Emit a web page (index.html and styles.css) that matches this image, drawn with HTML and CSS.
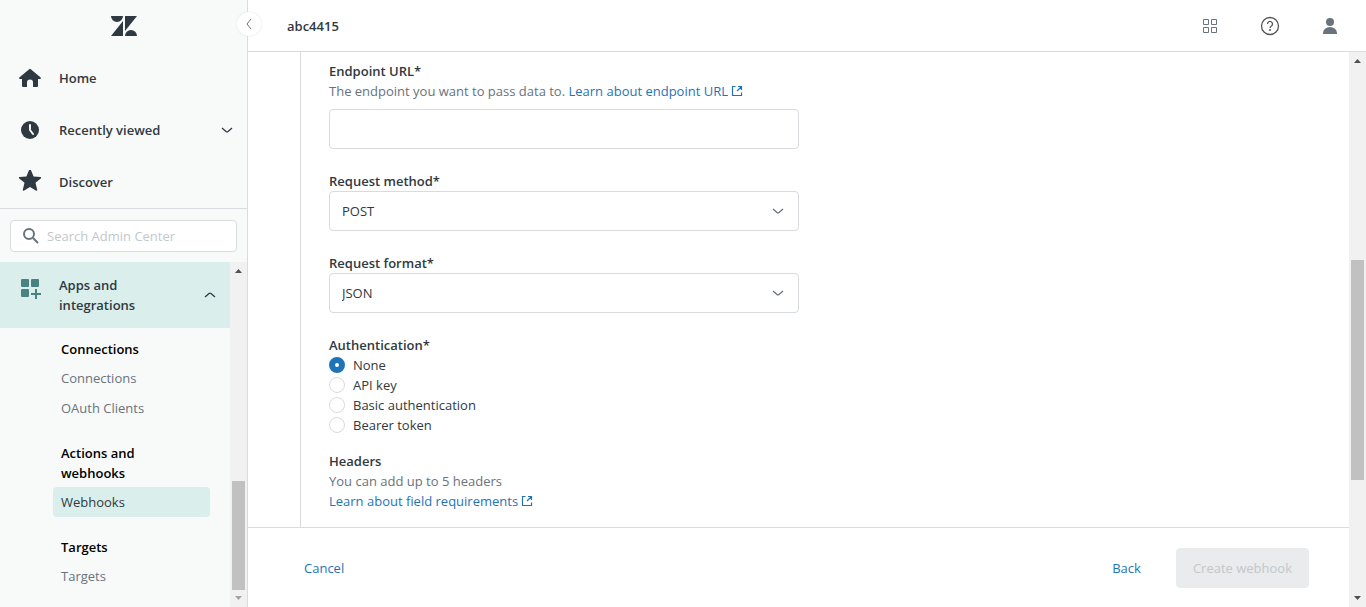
FILE: index.html
```html
<!DOCTYPE html>
<html lang="en">
<head>
<meta charset="utf-8">
<meta name="viewport" content="width=device-width, initial-scale=1">
<title>Create webhook</title>
<link rel="stylesheet" href="styles.css">
</head>
<body>
<div class="app">
  <aside class="sidebar">
    <div class="brand">
      <svg class="logo" width="26" height="20" viewBox="0 0 26 20" aria-hidden="true"><path d="M0 0h12a6 6 0 0 1-12 0zM12 5v15H0zM14 0h12L14 15zM14 20a6 6 0 0 1 12 0z"/></svg>
    </div>
    <button class="collapse" type="button" aria-label="Collapse sidebar">
      <svg width="6" height="12" viewBox="0 0 6 12"><path class="line" d="M5 1 1 6l4 5"/></svg>
    </button>
    <nav class="primary">
      <a class="nav-item" href="#">
        <svg width="22" height="20" viewBox="0 0 22 20"><path d="M10.200 1.200a1.200 1.200 0 0 1 1.600 0l9.600 8c.9.800.5 1.800-.6 1.800H19v7a1 1 0 0 1-1 1h-4v-4.500a3 3 0 0 0-6 0V19H4a1 1 0 0 1-1-1v-7H1.200C.1 11-.3 10 .6 9.200z"/></svg>
        <span>Home</span>
      </a>
      <a class="nav-item" href="#">
        <svg width="22" height="20" viewBox="0 0 22 20"><circle cx="11" cy="10" r="9"/><path class="hand" d="M11 5v5l3 4"/></svg>
        <span>Recently viewed</span>
        <svg class="chevron" width="12" height="6" viewBox="0 0 12 6"><path class="line" d="M1 1l4 3.500q1 .8 2 0L11 1"/></svg>
      </a>
      <a class="nav-item" href="#">
        <svg width="22" height="24" viewBox="0 0 22 24"><path d="M10.100 0q.9-1.600 1.800 0l2.700 6.400 6.700.5c1 .1 1 1 .4 1.500l-5.200 4.400 1.700 6.900c.2 1-.6 1.400-1.400.9L11 16.900l-5.800 3.700c-.8.500-1.600 0-1.400-.9l1.700-6.900L.3 8.400C-.3 7.900-.3 7 .7 6.900l6.700-.5z"/></svg>
        <span>Discover</span>
      </a>
    </nav>
    <div class="search-wrap">
      <label class="search">
        <svg width="18" height="18" viewBox="0 0 18 18"><circle cx="7" cy="7" r="5"/><path d="M11 11l5 5"/></svg>
        <input type="search" placeholder="Search Admin Center" aria-label="Search Admin Center">
      </label>
    </div>
    <div class="menu-scroll">
      <nav class="menu">
        <button class="menu-group" type="button">
          <svg width="22" height="22" viewBox="0 0 22 22"><rect x="2" y="1" width="8" height="8" rx="1"/><rect x="12" y="1" width="8" height="8" rx="1"/><rect x="2" y="11" width="8" height="8" rx="1"/><path d="M16 11h2v4h4v2h-4v4h-2v-4h-4v-2h4z"/></svg>
          <span>Apps and integrations</span>
          <svg class="chevron" width="12" height="6" viewBox="0 0 12 6"><path class="line" d="M1 5l4-3.500q1-.8 2 0L11 5"/></svg>
        </button>
        <div class="sections">
          <section class="section">
            <h2>Connections</h2>
            <div class="links"><a href="#">Connections</a><a href="#">OAuth Clients</a></div>
          </section>
          <section class="section">
            <h2>Actions and webhooks</h2>
            <div class="links"><a class="active" href="#" aria-current="page">Webhooks</a></div>
          </section>
          <section class="section">
            <h2>Targets</h2>
            <div class="links"><a href="#">Targets</a></div>
          </section>
        </div>
      </nav>
      <div class="scrollbar side-bar" aria-hidden="true">
        <svg width="17" height="17" viewBox="0 0 17 17"><path d="M5 11h7L8.500 7z"/></svg>
        <div class="before"></div><div class="thumb"></div><div class="after"></div>
        <svg class="end" width="17" height="17" viewBox="0 0 17 17"><path d="M5 6h7l-3.500 4z"/></svg>
      </div>
    </div>
  </aside>

  <div class="workspace">
    <header class="topbar">
      <h1>abc4415</h1>
      <div class="tools">
        <button type="button" aria-label="Products"><svg width="16" height="16" viewBox="0 0 16 16"><path class="line" d="M1.500 1.500h5v5h-5zM9.500 1.500h5v5h-5zM1.500 9.500h5v5h-5zM9.500 9.500h5v5h-5z"/></svg></button>
        <button type="button" aria-label="Help"><svg class="help" width="20" height="20" viewBox="0 0 20 20"><circle class="line" cx="10" cy="10" r="8.500"/><path class="line" d="M7.500 8a2.500 2.500 0 1 1 3.900 2C10.300 10.700 10 11 10 12"/><circle class="dot" cx="10" cy="14" r="1"/></svg></button>
        <button type="button" aria-label="Profile"><svg class="person" width="14" height="16" viewBox="0 0 14 16"><circle cx="7" cy="4" r="4"/><path d="M0 16v-1a7 6 0 0 1 14 0v1z"/></svg></button>
      </div>
    </header>
    <div class="body">
      <div class="page">
        <main class="content">
          <form class="form" id="webhook">
            <div class="field">
              <label class="label" for="url">Endpoint URL*</label>
              <p class="hint">The endpoint you want to pass data to. <a href="#">Learn about endpoint URL <svg width="12" height="12" viewBox="0 0 12 12"><path d="M4.500 1.500h-3v9h9v-3M7 1.500h3.500V5M10.500 1.500L6 6"/></svg></a></p>
              <input class="box url" id="url" type="url">
            </div>
            <div class="field">
              <label class="label" for="method">Request method*</label>
              <div class="select">
                <select class="box" id="method"><option>POST</option><option>GET</option></select>
                <svg width="12" height="6" viewBox="0 0 12 6"><path class="line" d="M1 1l4 3.500q1 .8 2 0L11 1"/></svg>
              </div>
            </div>
            <div class="field">
              <label class="label" for="format">Request format*</label>
              <div class="select">
                <select class="box" id="format"><option>JSON</option><option>XML</option></select>
                <svg width="12" height="6" viewBox="0 0 12 6"><path class="line" d="M1 1l4 3.500q1 .8 2 0L11 1"/></svg>
              </div>
            </div>
            <fieldset class="field">
              <legend class="label">Authentication*</legend>
              <label class="radio"><input type="radio" name="auth" checked>None</label>
              <label class="radio"><input type="radio" name="auth">API key</label>
              <label class="radio"><input type="radio" name="auth">Basic authentication</label>
              <label class="radio"><input type="radio" name="auth">Bearer token</label>
            </fieldset>
          </form>
          <section class="headers">
            <h2 class="label">Headers</h2>
            <p class="hint">You can add up to 5 headers</p>
            <p class="hint"><a href="#">Learn about field requirements <svg width="12" height="12" viewBox="0 0 12 12"><path d="M4.500 1.500h-3v9h9v-3M7 1.500h3.500V5M10.500 1.500L6 6"/></svg></a></p>
          </section>
        </main>
        <footer class="footer">
          <button class="text-btn" type="button">Cancel</button>
          <div class="actions">
            <button class="text-btn" type="button">Back</button>
            <button class="primary-btn" type="submit" form="webhook" disabled>Create webhook</button>
          </div>
        </footer>
      </div>
      <div class="scrollbar page-bar" aria-hidden="true">
        <svg width="17" height="17" viewBox="0 0 17 17"><path d="M5 11h7L8.500 7z"/></svg>
        <div class="before"></div><div class="thumb"></div><div class="after"></div>
        <svg width="17" height="17" viewBox="0 0 17 17"><path d="M5 6h7l-3.500 4z"/></svg>
      </div>
    </div>
  </div>
</div>
</body>
</html>
```

FILE: styles.css
```css
* { box-sizing: border-box; }
body {
  margin: 0;
  color: #2f3941;
  background: #fff;
  font: 13px/20px "Open Sans", "Noto Sans", sans-serif;
}
h1, h2, p { margin: 0; font-size: 13px; line-height: 20px; }
h1, h2, .label { font-weight: 600; }
p { font-weight: 400; }
a { color: inherit; text-decoration: none; }
button, input, select { font: inherit; color: inherit; }
button { border: 0; padding: 0; background: none; cursor: pointer; }
svg { flex: none; display: block; fill: currentColor; }
.line { fill: none; stroke: currentColor; }

.app { display: flex; height: 100vh; }

.sidebar {
  position: relative;
  display: flex;
  flex: none;
  flex-direction: column;
  width: 248px;
  background: #f8faf9;
  border-right: 1px solid #d8dcde;
}
.brand { display: flex; justify-content: center; align-items: center; height: 52px; flex: none; }
.collapse {
  position: absolute;
  top: 12px;
  right: -14px;
  display: grid;
  place-items: center;
  width: 24px;
  height: 24px;
  border-radius: 50%;
  color: #68737d;
  background: #fff;
  box-shadow: 0 0 2px #d8dcde;
}
.primary { border-bottom: 1px solid #d8dcde; }
.nav-item { display: flex; align-items: center; gap: 18px; height: 52px; padding: 0 14px 0 19px; font-weight: 600; }
.chevron { margin-left: auto; }
.chevron .line, .select .line { stroke-width: 1.3; }
.hand { fill: none; stroke: #f8faf9; stroke-width: 2; stroke-linecap: round; }
.search-wrap { padding: 11px 10px 10px; }
.search {
  display: flex;
  align-items: center;
  gap: 7px;
  height: 32px;
  padding: 0 11px;
  background: #fff;
  border: 1px solid #d8dcde;
  border-radius: 4px;
}
.search svg { fill: none; stroke: #68737d; stroke-width: 2; }
.search input { flex: 1; min-width: 0; padding: 0; border: 0; outline: 0; background: none; }
.search input::placeholder { color: #c2c8cc; opacity: 1; }

.menu-scroll { display: flex; flex: 1; min-height: 0; }
.menu { flex: 1; min-width: 0; overflow: hidden; }
.menu-group {
  display: flex;
  align-items: center;
  gap: 18px;
  width: 100%;
  padding: 13px 14px 13px 19px;
  text-align: left;
  font-weight: 600;
  background: #daeeec;
}
.menu-group span { width: 90px; }
.menu-group svg:first-child { align-self: flex-start; color: #498283; margin-top: 3px; }
.sections { display: grid; gap: 20px; padding: 11px 20px 16px 53px; }
.section { display: grid; gap: 4px; }
.section h2 { padding: 0 8px; max-width: 120px; color: #000; }
.links { display: grid; }
.links a { padding: 5px 8px; border-radius: 4px; color: #68737d; }
.links .active { color: #2f3941; background: #daeeec; }

.scrollbar { display: flex; flex: none; flex-direction: column; width: 17px; background: #f1f1f1; color: #505050; }
.scrollbar .end { color: #a3a3a3; }
.thumb { margin: 0 2px; background: #c1c1c1; }
.side-bar .before { flex: 202 0 0; }
.side-bar .thumb { flex: 109 0 0; }
.page-bar .before { flex: 191 0 0; }
.page-bar .thumb { flex: 220 0 0; }
.page-bar .after { flex: 110 0 0; }

.workspace { display: flex; flex: 1; flex-direction: column; min-width: 0; }
.topbar {
  display: flex;
  flex: none;
  align-items: center;
  justify-content: space-between;
  height: 52px;
  padding: 0 26px 0 39px;
  border-bottom: 1px solid #d8dcde;
}
.tools { display: flex; gap: 40px; color: #68737d; }
.tools button { display: grid; place-items: center; width: 20px; height: 20px; }
.help { color: #555; }
.help .line { stroke-width: 1.3; }
.body { display: flex; flex: 1; min-height: 0; }
.page { display: flex; flex: 1; flex-direction: column; min-width: 0; }
.content { flex: 1; min-height: 0; margin-left: 52px; padding: 9px 28px 0; border-left: 1px solid #d8dcde; overflow: hidden; }
.form { display: grid; gap: 22px; max-width: 470px; }
.field { min-width: 0; margin: 0; padding: 0; border: 0; }
.label { display: block; padding: 0; }
.hint { color: #68737d; }
.hint a { color: #1f73b7; }
.hint svg { display: inline; fill: none; stroke: currentColor; vertical-align: -1px; stroke-width: 1.2; }
.box {
  display: block;
  width: 100%;
  height: 40px;
  padding: 0 12px;
  background: #fff;
  border: 1px solid #d8dcde;
  border-radius: 4px;
  appearance: none;
}
.url { margin-top: 8px; }
.select { display: grid; align-items: center; }
.select > * { grid-area: 1 / 1; }
.select svg { justify-self: end; margin-right: 15px; color: #68737d; pointer-events: none; }
.radio { display: flex; align-items: center; gap: 8px; }
.radio input { appearance: none; width: 16px; height: 16px; margin: 0; border: 1px solid #d8dcde; border-radius: 50%; }
.radio input:checked { border: 6px solid #1f73b7; }
.headers { padding-top: 16px; }

.footer {
  display: flex;
  flex: none;
  align-items: center;
  justify-content: space-between;
  padding: 20px 40px 19px 56px;
  border-top: 1px solid #d8dcde;
}
.actions { display: flex; gap: 35px; }
.text-btn { color: #1f73b7; }
.primary-btn { height: 40px; padding: 0 17px; border-radius: 4px; color: #c2c8cc; background: #e9ebed; }
```
